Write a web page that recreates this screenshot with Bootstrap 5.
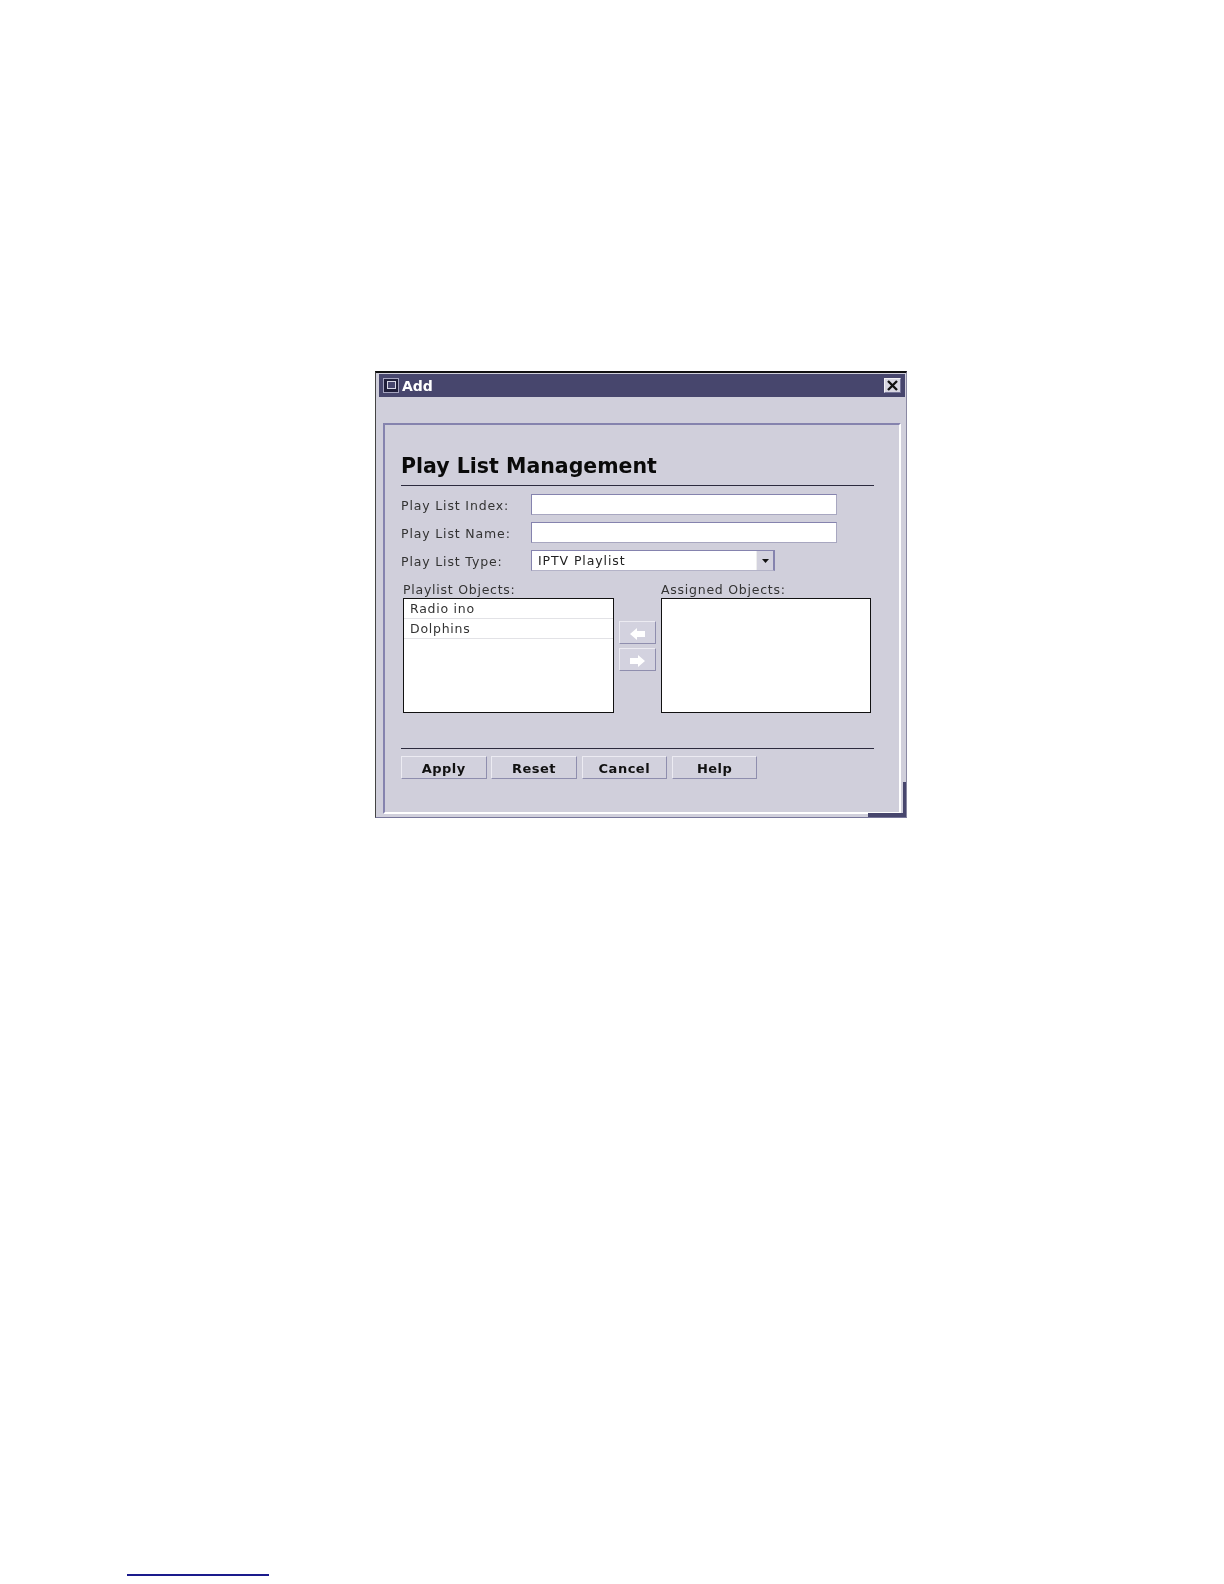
<!DOCTYPE html>
<html lang="en">
<head>
<meta charset="utf-8">
<title>Play List Management</title>
<link href="https://cdn.jsdelivr.net/npm/bootstrap@5.3.0/dist/css/bootstrap.min.css" rel="stylesheet">
<style>
body{background:#fff;margin:0;padding:371px 0 0 375px;font-family:"DejaVu Sans",sans-serif;color:#222;width:1224px;height:1584px;overflow:hidden}
.win{position:relative;width:532px;height:447px;background:#d0cfdb;border-top:2px solid #111;border-left:1px solid #444;border-right:1px solid #8a89a3;border-bottom:1px solid #77769a;padding:1px 1px 0 3px;filter:blur(.45px)}
.win-title{height:23px;background:#47466d;color:#fff;font-weight:700;font-size:14px;padding-left:4px}
.win-name{padding-top:2px}
.close-box{width:17px;height:15px;margin-right:4px;background:#d8d7e2;border:1px solid;border-color:#f2f2f6 #77769a #77769a #f2f2f6}
.panel-box{margin:26px 4px 0 4px;height:391px;border-style:solid;border-width:2px;border-color:#8583ae #fff #fff #8583ae;padding:0 0 0 16px}
.head-block{height:61px;width:473px;border-bottom:1px solid #2c2b3e;font-size:20.5px;font-weight:700;color:#0a0a0a;line-height:1;padding-bottom:9px}
.field-row{width:473px;height:21px;font-size:12.5px;letter-spacing:.85px;color:#333;margin-top:7px}
.field-first{margin-top:8px}
.field-lab{width:130px;padding-top:4px}
.fld{width:306px;height:21px;padding:0;border-radius:0;border:1px solid;border-color:#8583ae #a8a7c0 #a8a7c0 #8583ae;background:#fff}
.sel-box{width:244px;height:21px;padding:0 0 0 6px;font-size:12.5px;letter-spacing:.9px;color:#222;background:#fff;border-top:1px solid #8583ae;border-left:1px solid #8583ae;border-right:2px solid #8583ae;border-bottom:1px solid #b4b3c8}
.sel-name{padding-top:2px}
.sel-arrow{width:17px;height:100%;background:#d3d2de;border-left:1px solid #eee}
.lists{margin-left:2px;margin-top:8px;font-size:12.5px;letter-spacing:.75px;color:#333}
.lst-lab{height:19px;line-height:21px}
.lst{height:115px;background:#fff;border:1px solid #111;border-radius:0}
.lst-w1{width:211px}
.lst-w2{width:210px}
.lst .list-group-item{height:20.5px;padding:0 0 0 6px;line-height:20px;border:0;border-bottom:1px solid #e2e2e6;border-radius:0;background:#fff;color:#333;font-size:12.5px;letter-spacing:.75px}
.lst .list-group-item:first-child{height:19.5px}
.arr-col{width:37px;margin:42px 5px 0 5px}
.arr-btn{width:37px;height:23px;padding:2px 0 0;border-radius:0;background:#d3d2df;border:1px solid;border-color:#ecebf2 #8f8eae #8f8eae #ecebf2}
.sep{width:473px;height:1px;background:#2c2b3e;margin-top:35px}
.btn-row{margin-top:7px;gap:4.800px}
.act{width:85.500px;height:23px;padding:1px 0 0;border-radius:0;background:#d2d1dd;border:1px solid;border-color:#ecebf2 #8f8eae #8f8eae #ecebf2;color:#111;font-weight:700;font-size:13px;letter-spacing:.5px;line-height:21px}
.act:hover{background:#d2d1dd;color:#111}
.corner-a{position:absolute;right:0;bottom:0;width:3px;height:35px;background:#47466d}
.corner-b{position:absolute;right:0;bottom:0;width:38px;height:4px;background:#47466d}
.foot-rule{margin:756px 0 0 -248px;width:142px;height:2px;background:#1a1a8c}
</style>
</head>
<body>
<div class="win">
  <div class="win-title d-flex align-items-center">
    <svg width="16" height="15" viewBox="0 0 16 15" style="margin-right:3px"><rect x=".5" y=".5" width="15" height="14" fill="#1f1e3a" stroke="#a5a4bf"/><rect x="4.500" y="3.500" width="8" height="7" fill="#47466d" stroke="#d8d8e6"/></svg>
    <span class="win-name">Add</span>
    <div class="close-box ms-auto d-flex align-items-center justify-content-center">
      <svg width="13" height="11" viewBox="0 0 13 11"><path d="M2 1l9 9M11 1l-9 9" stroke="#111" stroke-width="2.400" fill="none"/></svg>
    </div>
  </div>
  <div class="panel-box">
    <div class="head-block d-flex align-items-end">Play List Management</div>
    <div class="field-row field-first d-flex align-items-center"><span class="field-lab">Play List Index:</span><input class="form-control fld" type="text"></div>
    <div class="field-row d-flex align-items-center"><span class="field-lab">Play List Name:</span><input class="form-control fld" type="text"></div>
    <div class="field-row d-flex align-items-center"><span class="field-lab">Play List Type:</span>
      <div class="sel-box d-flex align-items-center justify-content-between"><span class="sel-name">IPTV Playlist</span>
        <div class="sel-arrow d-flex align-items-center justify-content-center"><svg width="7" height="4" viewBox="0 0 7 4"><path d="M0 0h7L3.500 4z" fill="#111"/></svg></div>
      </div>
    </div>
    <div class="lists d-flex">
      <div>
        <div class="lst-lab">Playlist Objects:</div>
        <div class="list-group lst lst-w1">
          <div class="list-group-item">Radio ino</div>
          <div class="list-group-item">Dolphins</div>
        </div>
      </div>
      <div class="arr-col d-flex flex-column gap-1">
        <button class="btn arr-btn d-flex align-items-center justify-content-center" type="button" aria-label="Remove"><svg width="15" height="12" viewBox="0 0 15 12"><path d="M7 0v3h8v6H7v3L0 6z" fill="#fff"/></svg></button>
        <button class="btn arr-btn d-flex align-items-center justify-content-center" type="button" aria-label="Add"><svg width="15" height="12" viewBox="0 0 15 12"><path d="M8 0v3H0v6h8v3l7-6z" fill="#fff"/></svg></button>
      </div>
      <div>
        <div class="lst-lab">Assigned Objects:</div>
        <div class="list-group lst lst-w2"></div>
      </div>
    </div>
    <div class="sep"></div>
    <div class="btn-row d-flex">
      <button class="btn act" type="button">Apply</button>
      <button class="btn act" type="button">Reset</button>
      <button class="btn act" type="button">Cancel</button>
      <button class="btn act" type="button">Help</button>
    </div>
  </div>
  <div class="corner-a"></div>
  <div class="corner-b"></div>
</div>
<div class="foot-rule"></div>
</body>
</html>
